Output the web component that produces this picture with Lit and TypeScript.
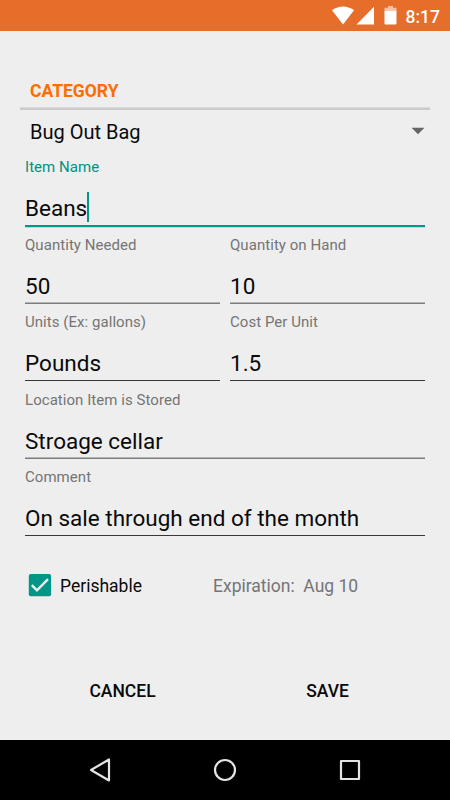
import { LitElement, html, css } from "lit";
import { customElement, property } from "lit/decorators.js";
import { classMap } from "lit/directives/class-map.js";

@customElement("form-field")
class FormField extends LitElement {
  static styles = css`
    :host { display: flex; flex-direction: column; height: 77.5px; min-width: 0; }
    .label { font-size: 15px; line-height: 20px; color: #757575; letter-spacing: 0.05px; white-space: pre; }
    .value { display: flex; align-items: center; height: 30px; margin-top: 16px; font-size: 22.5px; line-height: 30px; color: #0a0a0a; white-space: pre; }
    .line { height: 1px; margin-top: 2px; background: #3a3538; }
    .soft { height: 2px; margin-top: 1.5px; background: linear-gradient(#b5b5b5 50%, #7d7d7d 50%); }
    .focused .label { color: #009284; }
    .focused .line { height: 3px; margin-top: 2px; background: linear-gradient(#009688 67%, #b9dcd8 67%); }
    .caret { width: 2px; height: 30px; margin-top: -3px; background: #009688; }
  `;
  @property() label = "";
  @property() value = "";
  @property({ type: Boolean }) focused = false;
  @property({ type: Boolean }) soft = false;
  render() {
    return html`<div class=${classMap({ focused: this.focused })}>
      <div class="label">${this.label}</div>
      <div class="value"><span>${this.value}</span>${this.focused ? html`<i class="caret"></i>` : ""}</div>
      <div class=${classMap({ line: true, soft: this.soft })}></div>
    </div>`;
  }
}

@customElement("app-root")
class AppRoot extends LitElement {
  static styles = css`
    :host { display: flex; flex-direction: column; width: 450px; height: 800px; background: #eee; font-family: Roboto, sans-serif; color: #0a0a0a; overflow: hidden; }
    svg { display: block; }
    .status { height: 31px; flex: none; background: #e76d2b; display: flex; align-items: center; color: #fff; }
    .status svg { margin-left: 330px; flex: none; }
    .time { font-size: 17.5px; font-weight: 500; line-height: 20px; margin-top: 2px; margin-left: 5.5px; }
    main { flex: 1; padding: 50px 25px 0; }
    .category { margin: 0 -5px; padding: 0 10px 6px; height: 20px; font-size: 17.5px; line-height: 21px; font-weight: 700; color: #ff6d00; }
    .rule { height: 3px; margin: 0 -5px; background: linear-gradient(#dadada 33%, #cacaca 33%); }
    .spinner { height: 43px; margin-bottom: 4px; display: flex; align-items: center; justify-content: space-between; padding-left: 5px; font-size: 20px; }
    .spinner svg { margin-top: -2px; }
    .fields { display: grid; grid-template-columns: 195px 195px; column-gap: 10px; }
    .wide { grid-column: 1 / 3; }
    .options { display: flex; align-items: center; height: 30px; margin-top: 26px; font-size: 17.5px; }
    .box { margin-left: 3px; margin-top: -2px; flex: none; }
    .check { margin-left: 8px; width: 153px; }
    .expiry { color: #757575; white-space: pre; }
    .actions { display: grid; grid-template-columns: 205px 205px; margin: 80px -5px 0; text-align: center; font-size: 17.5px; line-height: 20px; font-weight: 500; }
    nav { height: 60px; flex: none; background: #000; }
  `;
  render() {
    return html`
      <div class="status">
        <svg width="70" height="31" viewBox="0 0 70 31">
          <path fill="#fff" d="M2 10.3Q13 2.8 24 10.3L13 24.5Z" />
          <path fill="#fff" d="M44 6.7V24.5H26.5Z" />
          <path fill="#f5c0a4" d="M58 6h5v1.8h3.5v2.7h-12V7.8h3.5Z" />
          <path fill="#fff" d="M54.5 10.5h12v13.3q0 .8-.8.8h-10.4q-.8 0-.8-.8Z" />
        </svg>
        <span class="time">8:17</span>
      </div>
      <main>
        <div class="category">CATEGORY</div>
        <div class="rule"></div>
        <div class="spinner"><span>Bug Out Bag</span>
          <svg width="14" height="8" viewBox="0 0 14 8"><path fill="#666" d="M.5.7h13L7 7.3Z" /></svg>
        </div>
        <div class="fields">
          <form-field class="wide" label="Item Name" value="Beans" focused></form-field>
          <form-field label="Quantity Needed" value="50" soft></form-field>
          <form-field label="Quantity on Hand" value="10" soft></form-field>
          <form-field label="Units (Ex: gallons)" value="Pounds"></form-field>
          <form-field label="Cost Per Unit" value="1.5"></form-field>
          <form-field class="wide" label="Location Item is Stored" value="Stroage cellar" soft></form-field>
          <form-field class="wide" label="Comment" value="On sale through end of the month"></form-field>
        </div>
        <div class="options">
          <svg class="box" width="24" height="24" viewBox="0 0 24 24">
            <rect x="0.8" y="1" width="22.3" height="22.3" rx="2" fill="#009688" />
            <path d="M3.8 12.1l5.2 5.2L20 6.2" fill="none" stroke="#eee" stroke-width="2.4" />
          </svg>
          <span class="check">Perishable</span><span class="expiry">Expiration:  Aug 10</span>
        </div>
        <div class="actions"><span>CANCEL</span><span>SAVE</span></div>
      </main>
      <nav>
        <svg width="450" height="60" viewBox="0 0 450 60" fill="none" stroke="#e4e4e4" stroke-width="2.2" stroke-linejoin="round">
          <path d="M91 30L109 19.5V40.5Z" />
          <circle cx="225" cy="30" r="10" />
          <rect x="341" y="21" width="18" height="18" />
        </svg>
      </nav>`;
  }
}
